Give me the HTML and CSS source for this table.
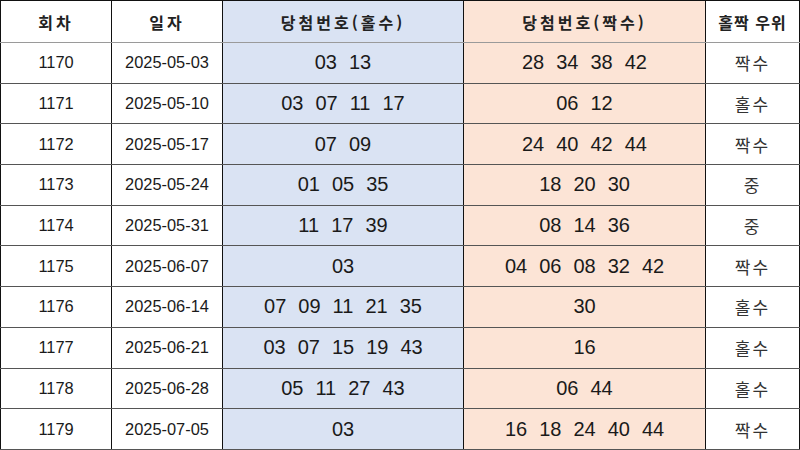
FILE: index.html
```html
<!DOCTYPE html>
<html lang="ko">
<head>
<meta charset="utf-8">
<title>당첨번호 홀짝</title>
<link rel="stylesheet" href="styles.css">
</head>
<body>
<table class="lotto">
  <colgroup>
    <col class="c-round"><col class="c-date"><col class="c-odd"><col class="c-even"><col class="c-win">
  </colgroup>
  <thead>
    <tr>
      <th>회차</th><th>일자</th><th class="odd">당첨번호(홀수)</th><th class="even">당첨번호(짝수)</th><th class="win-h">홀짝 우위</th>
    </tr>
  </thead>
  <tbody>
    <tr><td>1170</td><td>2025-05-03</td><td class="odd"><div class="nums"><span>03</span><span>13</span></div></td><td class="even"><div class="nums"><span>28</span><span>34</span><span>38</span><span>42</span></div></td><td class="win">짝수</td></tr>
    <tr><td>1171</td><td>2025-05-10</td><td class="odd"><div class="nums"><span>03</span><span>07</span><span>11</span><span>17</span></div></td><td class="even"><div class="nums"><span>06</span><span>12</span></div></td><td class="win">홀수</td></tr>
    <tr><td>1172</td><td>2025-05-17</td><td class="odd"><div class="nums"><span>07</span><span>09</span></div></td><td class="even"><div class="nums"><span>24</span><span>40</span><span>42</span><span>44</span></div></td><td class="win">짝수</td></tr>
    <tr><td>1173</td><td>2025-05-24</td><td class="odd"><div class="nums"><span>01</span><span>05</span><span>35</span></div></td><td class="even"><div class="nums"><span>18</span><span>20</span><span>30</span></div></td><td class="win">중</td></tr>
    <tr><td>1174</td><td>2025-05-31</td><td class="odd"><div class="nums"><span>11</span><span>17</span><span>39</span></div></td><td class="even"><div class="nums"><span>08</span><span>14</span><span>36</span></div></td><td class="win">중</td></tr>
    <tr><td>1175</td><td>2025-06-07</td><td class="odd"><div class="nums"><span>03</span></div></td><td class="even"><div class="nums"><span>04</span><span>06</span><span>08</span><span>32</span><span>42</span></div></td><td class="win">짝수</td></tr>
    <tr><td>1176</td><td>2025-06-14</td><td class="odd"><div class="nums"><span>07</span><span>09</span><span>11</span><span>21</span><span>35</span></div></td><td class="even"><div class="nums"><span>30</span></div></td><td class="win">홀수</td></tr>
    <tr><td>1177</td><td>2025-06-21</td><td class="odd"><div class="nums"><span>03</span><span>07</span><span>15</span><span>19</span><span>43</span></div></td><td class="even"><div class="nums"><span>16</span></div></td><td class="win">홀수</td></tr>
    <tr><td>1178</td><td>2025-06-28</td><td class="odd"><div class="nums"><span>05</span><span>11</span><span>27</span><span>43</span></div></td><td class="even"><div class="nums"><span>06</span><span>44</span></div></td><td class="win">홀수</td></tr>
    <tr><td>1179</td><td>2025-07-05</td><td class="odd"><div class="nums"><span>03</span></div></td><td class="even"><div class="nums"><span>16</span><span>18</span><span>24</span><span>40</span><span>44</span></div></td><td class="win">짝수</td></tr>
  </tbody>
</table>
</body>
</html>
```
FILE: styles.css
```css
html, body {
  margin: 0;
  padding: 0;
  background: #ffffff;
}

.lotto {
  width: 799px;
  border-collapse: collapse;
  table-layout: fixed;
  font-family: "Liberation Sans", Arial, "Noto Sans CJK KR", sans-serif;
  color: #1a1a1a;
}

.c-round { width: 111px; }
.c-date { width: 111px; }
.c-odd { width: 241px; }
.c-even { width: 242px; }
.c-win { width: 94px; }

.lotto th,
.lotto td {
  border-left: 1px solid #111;
  border-right: 1px solid #111;
  border-bottom: 1px solid #555;
  padding: 0;
  text-align: center;
  vertical-align: middle;
}

.lotto thead tr {
  height: 42px;
}

.lotto thead th {
  border-top: 1px solid #111;
  border-bottom: 1px solid #9a9a9a;
  font-family: "Noto Sans CJK KR", sans-serif;
  font-weight: 700;
  font-size: 16px;
  letter-spacing: 3px;
  color: #222;
}

.lotto thead th.win-h {
  letter-spacing: 1px;
}

.lotto tbody tr {
  height: 40.7px;
}

.lotto tbody td {
  font-size: 16.4px;
}

.odd {
  background: #dae3f3;
}

.even {
  background: #fce4d6;
}

.nums {
  display: flex;
  justify-content: center;
  gap: 12px;
  font-size: 20px;
}

.lotto tbody td.win {
  font-family: "Noto Sans CJK KR", sans-serif;
  font-size: 17px;
  letter-spacing: 2px;
  color: #333;
}
```
